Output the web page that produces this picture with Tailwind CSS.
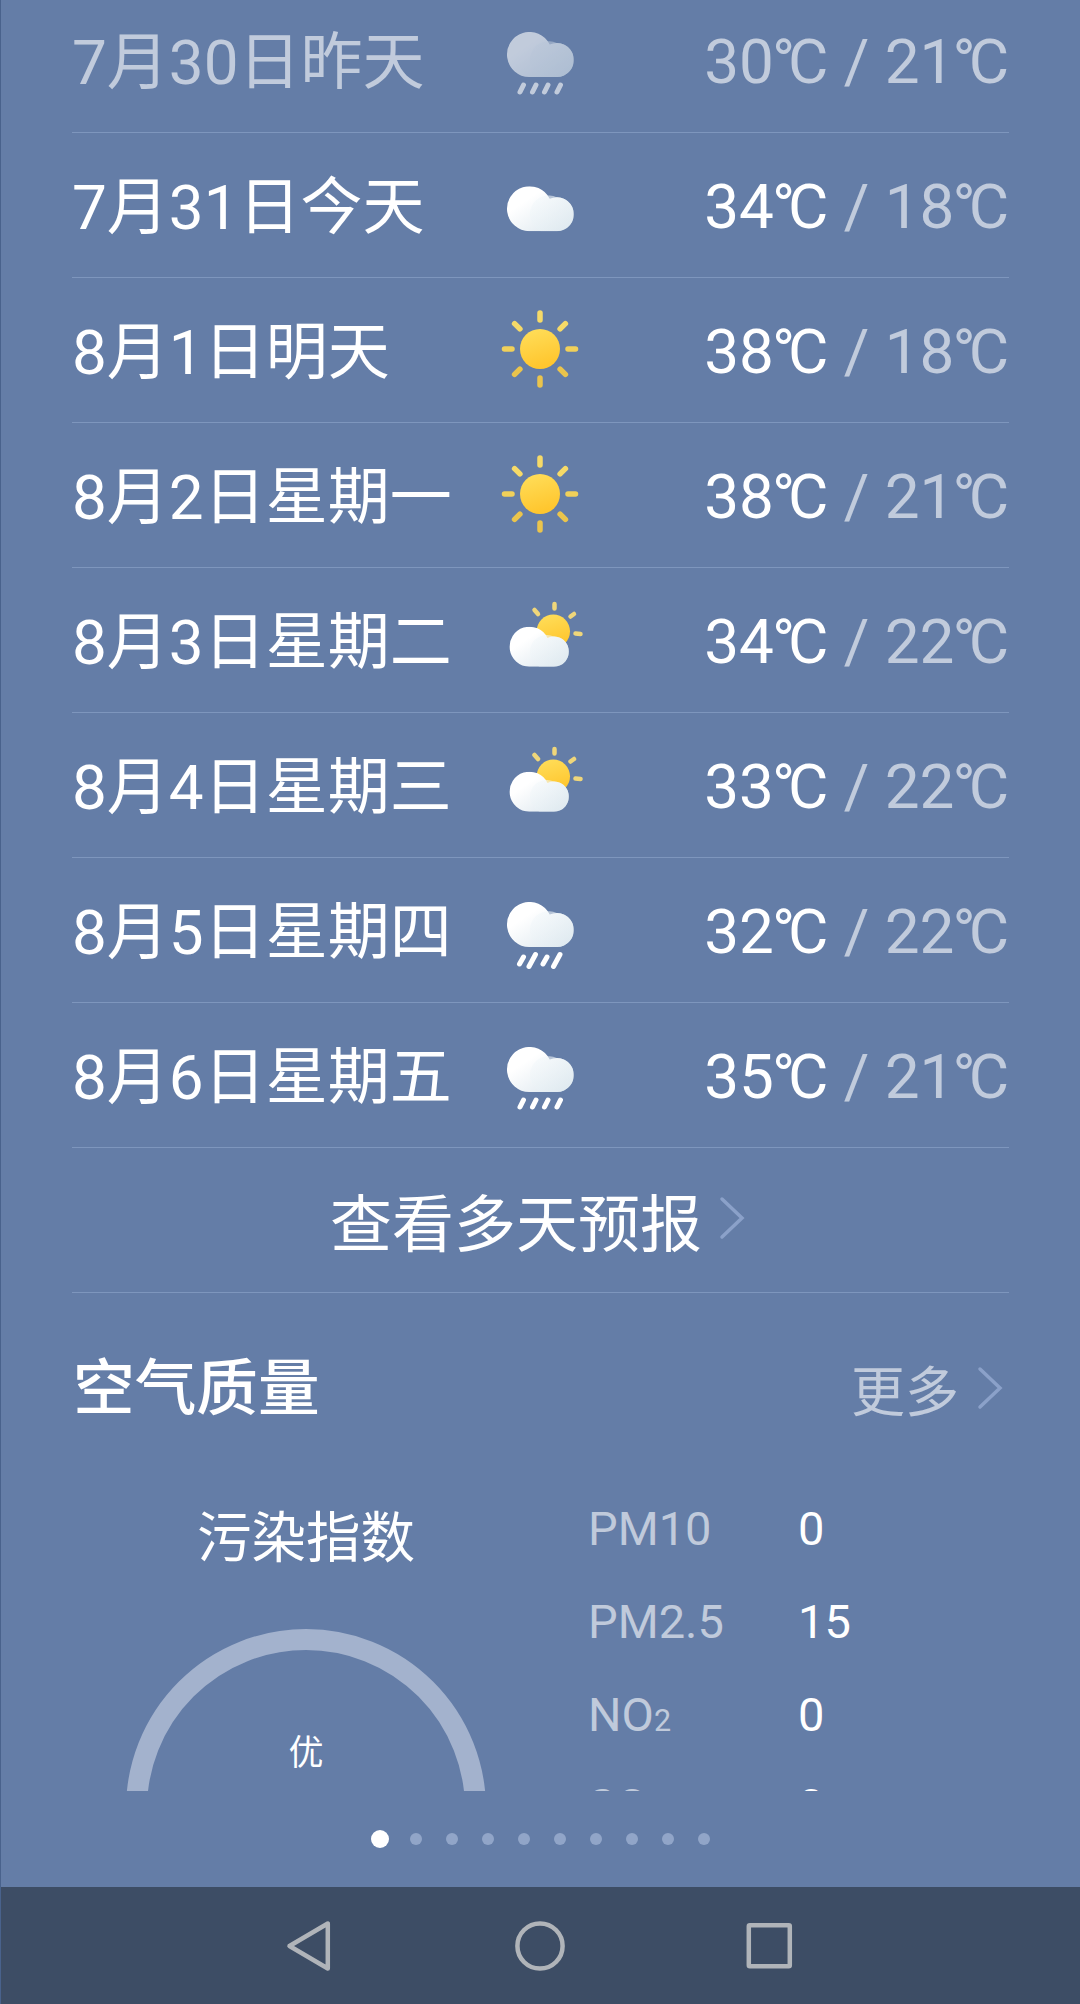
<!DOCTYPE html>
<html lang="zh-CN">
<head>
<meta charset="utf-8">
<title>天气</title>
<script src="https://cdn.jsdelivr.net/npm/@tailwindcss/browser@4"></script>
</head>
<body class="bg-[#647da7]">
<svg class="absolute size-0">
  <defs>
    <linearGradient id="gc" x1="0" y1="0" x2="1" y2="1"><stop offset=".3" stop-color="#fff"/><stop offset="1" stop-color="#d8e4ec"/></linearGradient>
    <linearGradient id="gs" x1="0" y1="0" x2="0.3" y2="1"><stop offset="0" stop-color="#ffdf5c"/><stop offset="1" stop-color="#ffc62e"/></linearGradient>
    <linearGradient id="gp" x1="0" y1="0" x2="1" y2="1"><stop offset="0" stop-color="#f6fafc"/><stop offset="1" stop-color="#dfeaf0"/></linearGradient>
    <symbol id="cloud" viewBox="0 0 67 45"><path fill="url(#gc)" d="M22.500 45A22.500 22.500 0 1 1 43 12.600A17 17 0 1 1 50 45Z"/><path fill="url(#gp)" opacity=".6" d="M50 11A17 17 0 0 1 50 45H34A17 17 0 0 1 50 11Z"/></symbol>
    <symbol id="sun" viewBox="0 0 120 144"><circle cx="60" cy="71" r="20" fill="url(#gs)"/><g stroke-width="5.500" stroke-linecap="round"><path stroke="#f6da68" d="M60 42V35M39.900 50.900L34.600 45.600M80.100 50.900L85.400 45.600"/><path stroke="#f0d05a" d="M32 71H24.500M88 71H95.500"/><path stroke="#eac44c" d="M60 100V107M39.900 91.100L34.600 96.400M80.100 91.100L85.400 96.400"/></g></symbol>
    <symbol id="partly" viewBox="0 0 120 144"><circle cx="73.300" cy="63.300" r="16.700" fill="url(#gs)"/><path stroke="#efd67a" stroke-width="4.500" stroke-linecap="round" d="M74.500 40.500V36M58 46L54.500 42M90.500 48.500L94 46M95.500 65.500L100.500 66"/><use href="#cloud" x="29.300" y="58.700" width="59.500" height="40"/></symbol>
    <symbol id="rain" viewBox="0 0 120 144"><use href="#cloud" x="26.700" y="44" width="67" height="45"/><path stroke="#fff" stroke-width="5" stroke-linecap="round" d="M43.500 97L40 104M56 97L52.500 104M68 97L64.500 104M80.500 97L77 104"/></symbol>
    <symbol id="heavy" viewBox="0 0 120 144"><use href="#cloud" x="26.700" y="44" width="67" height="45"/><path stroke="#fff" stroke-width="5" stroke-linecap="round" d="M43.500 99L39.500 106M55.500 96.500L49 108.500M67 99L63 106M80 96.500L73.500 108.500"/></symbol>
    <symbol id="cloudy" viewBox="0 0 120 144"><use href="#cloud" x="26.700" y="53.200" width="67" height="45"/></symbol>
  </defs>
</svg>
<div class="flex h-[2004px] w-[1080px] flex-col overflow-hidden border-l border-[#49628c] bg-[#647da7] font-[Roboto,'Noto_Sans_CJK_SC',sans-serif] text-white">
  <main class="h-[1791px] overflow-hidden pr-[71px] pl-[71px]">
    <ul class="-mt-3 text-[62px] leading-[149px] whitespace-nowrap">
      <li class="grid h-[145px] grid-cols-[408px_120px_1fr] border-b border-[#7e96bd] text-white/60"><span>7月30日昨天</span><svg class="h-36 w-[120px] opacity-60"><use href="#rain"/></svg><span class="text-right leading-[147px]">30<span class="-ml-[2px] tracking-[-7px]">°</span>C / 21<span class="-ml-[2px] tracking-[-7px]">°</span>C</span></li>
      <li class="grid h-[145px] grid-cols-[408px_120px_1fr] border-b border-[#7e96bd]"><span>7月31日今天</span><svg class="h-36 w-[120px]"><use href="#cloudy"/></svg><span class="text-right leading-[147px]">34<span class="-ml-[2px] tracking-[-7px]">°</span>C<span class="text-white/60"> / 18<span class="-ml-[2px] tracking-[-7px]">°</span>C</span></span></li>
      <li class="grid h-[145px] grid-cols-[408px_120px_1fr] border-b border-[#7e96bd]"><span>8月1日明天</span><svg class="h-36 w-[120px]"><use href="#sun"/></svg><span class="text-right leading-[147px]">38<span class="-ml-[2px] tracking-[-7px]">°</span>C<span class="text-white/60"> / 18<span class="-ml-[2px] tracking-[-7px]">°</span>C</span></span></li>
      <li class="grid h-[145px] grid-cols-[408px_120px_1fr] border-b border-[#7e96bd]"><span>8月2日星期一</span><svg class="h-36 w-[120px]"><use href="#sun"/></svg><span class="text-right leading-[147px]">38<span class="-ml-[2px] tracking-[-7px]">°</span>C<span class="text-white/60"> / 21<span class="-ml-[2px] tracking-[-7px]">°</span>C</span></span></li>
      <li class="grid h-[145px] grid-cols-[408px_120px_1fr] border-b border-[#7e96bd]"><span>8月3日星期二</span><svg class="h-36 w-[120px]"><use href="#partly"/></svg><span class="text-right leading-[147px]">34<span class="-ml-[2px] tracking-[-7px]">°</span>C<span class="text-white/60"> / 22<span class="-ml-[2px] tracking-[-7px]">°</span>C</span></span></li>
      <li class="grid h-[145px] grid-cols-[408px_120px_1fr] border-b border-[#7e96bd]"><span>8月4日星期三</span><svg class="h-36 w-[120px]"><use href="#partly"/></svg><span class="text-right leading-[147px]">33<span class="-ml-[2px] tracking-[-7px]">°</span>C<span class="text-white/60"> / 22<span class="-ml-[2px] tracking-[-7px]">°</span>C</span></span></li>
      <li class="grid h-[145px] grid-cols-[408px_120px_1fr] border-b border-[#7e96bd]"><span>8月5日星期四</span><svg class="h-36 w-[120px]"><use href="#heavy"/></svg><span class="text-right leading-[147px]">32<span class="-ml-[2px] tracking-[-7px]">°</span>C<span class="text-white/60"> / 22<span class="-ml-[2px] tracking-[-7px]">°</span>C</span></span></li>
      <li class="grid h-[145px] grid-cols-[408px_120px_1fr] border-b border-[#7e96bd]"><span>8月6日星期五</span><svg class="h-36 w-[120px]"><use href="#rain"/></svg><span class="text-right leading-[147px]">35<span class="-ml-[2px] tracking-[-7px]">°</span>C<span class="text-white/60"> / 21<span class="-ml-[2px] tracking-[-7px]">°</span>C</span></span></li>
    </ul>
    <div class="flex h-[145px] items-center border-b border-[#7e96bd] pl-[258px] text-[62px] leading-[134px]">
      <span class="pt-3">查看多天预报</span>
      <svg class="mb-1 ml-[17px] h-11 w-[27px]" viewBox="0 0 27 44" fill="none" stroke="#8ba1c9" stroke-width="3.500" stroke-linecap="round"><path d="M3 3L23 22L3 41"/></svg>
    </div>
    <header class="flex h-[186px] items-center justify-between">
      <h2 class="pt-[5px] pl-px text-[61.7px] leading-[90px] font-medium">空气质量</h2>
      <div class="flex items-center pr-[5px] text-[54px] leading-[80px] text-white/60"><span class="pt-4">更多</span><svg class="ml-[18px] mt-1 h-11 w-[27px]" viewBox="0 0 27 44" fill="none" stroke="#8ba1c9" stroke-width="3.500" stroke-linecap="round"><path d="M3 3L23 22L3 41"/></svg></div>
    </header>
    <section class="grid grid-cols-[468px_1fr]">
      <div class="flex flex-col items-center">
        <h3 class="mt-[19px] text-[54.500px] leading-[80px]">污染指数</h3>
        <div class="mt-[51px] flex h-[360px] w-[360px] flex-col items-center rounded-full border-[21px] border-[#a3b2cd]"><span class="mt-[79px] text-[35px] leading-[50px]">优</span></div>
      </div>
      <dl class="grid grid-cols-[210px_1fr] grid-rows-[93px_93px_91px_93px] pt-[3px] pl-[48px] text-[47px] leading-[93px]">
        <dt class="text-white/60">PM10</dt><dd>0</dd>
        <dt class="text-white/60">PM2.5</dt><dd>15</dd>
        <dt class="text-white/60">NO<span class="text-[30.500px]">2</span></dt><dd>0</dd>
        <dt class="text-white/60">SO<span class="text-[30.500px]">2</span></dt><dd>0</dd>
      </dl>
    </section>
  </main>
  <div class="flex h-24 items-center justify-center gap-6 pl-[2px]">
    <i class="-mr-[3px] -ml-[3px] size-[18px] rounded-full bg-white"></i>
    <i class="size-3 rounded-full bg-[#91a5c8]"></i><i class="size-3 rounded-full bg-[#91a5c8]"></i><i class="size-3 rounded-full bg-[#91a5c8]"></i><i class="size-3 rounded-full bg-[#91a5c8]"></i><i class="size-3 rounded-full bg-[#91a5c8]"></i><i class="size-3 rounded-full bg-[#91a5c8]"></i><i class="size-3 rounded-full bg-[#91a5c8]"></i><i class="size-3 rounded-full bg-[#91a5c8]"></i><i class="size-3 rounded-full bg-[#91a5c8]"></i>
  </div>
  <nav class="-ml-px h-[117px] w-[1080px] bg-[#3d4d65]">
    <svg class="h-[117px] w-[1080px]" viewBox="0 0 1080 117" fill="none" stroke="#b0b4b9" stroke-width="4.500" stroke-linejoin="round"><path d="M289.500 59L327.800 36.500V81.500Z"/><circle cx="540" cy="59" r="22.600"/><rect x="748.800" y="38.300" width="41" height="41" rx="1"/></svg>
  </nav>
</div>
</body>
</html>
